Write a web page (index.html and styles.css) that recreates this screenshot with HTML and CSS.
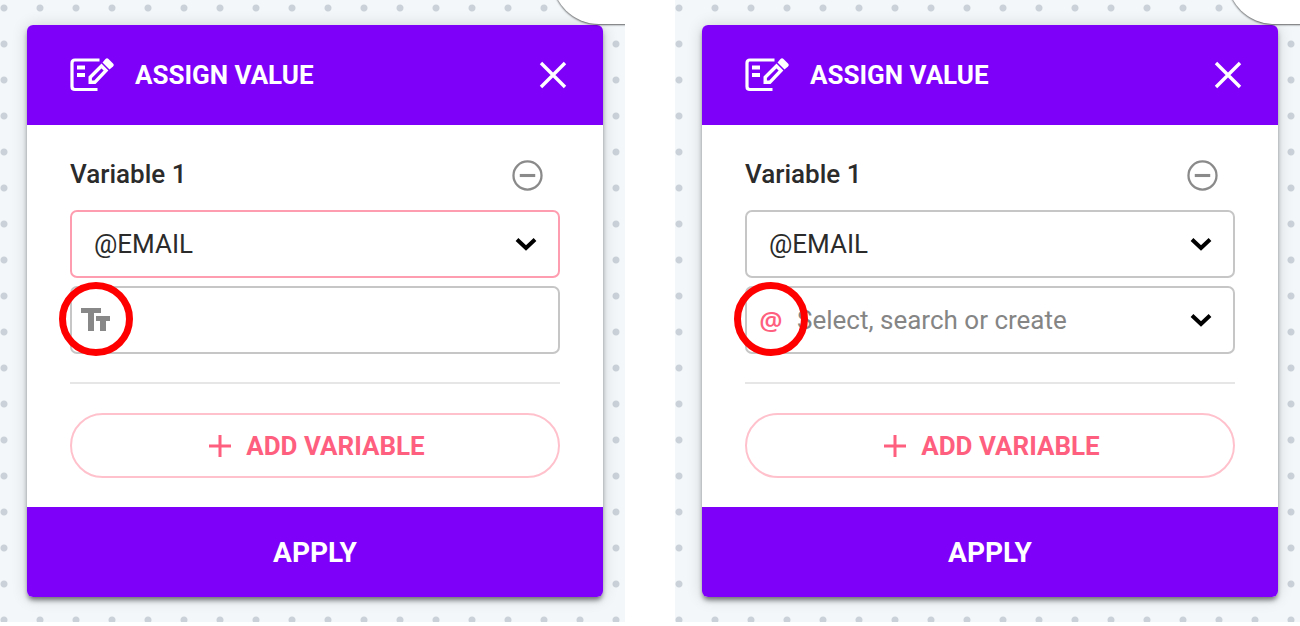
FILE: index.html
```html
<!DOCTYPE html>
<html lang="en">
<head>
<meta charset="utf-8">
<meta name="viewport" content="width=device-width, initial-scale=1">
<title>Assign value</title>
<link rel="stylesheet" href="styles.css">
</head>
<body>
<svg class="sprite" aria-hidden="true">
  <symbol id="i-edit" viewBox="0 0 44 34">
    <path d="M29.500 2H5Q2 2 2 5V28.500Q2 31.500 5 31.500H27.500" fill="none" stroke="currentColor" stroke-width="3.200"/>
    <path d="M7 7.500h8v4H7zM7 15h8v4H7z" fill="currentColor"/>
    <path d="M20.200 24.300V19.300L31.500 8L36 12.500L24.800 24.300Z" fill="none" stroke="currentColor" stroke-width="3.400"/>
    <path d="M32.500 4.500L35.500 1Q37 -0.500 38.500 1L43 5.500Q44.500 7 43 8.500L39.500 11.500Z" fill="currentColor"/>
  </symbol>
  <symbol id="i-close" viewBox="0 0 28 28">
    <path d="M2 2L26 26M26 2L2 26" fill="none" stroke="currentColor" stroke-width="3.400"/>
  </symbol>
  <symbol id="i-minus" viewBox="0 0 32 32">
    <circle cx="16" cy="16" r="13.600" fill="none" stroke="currentColor" stroke-width="2.200"/>
    <path d="M8.500 16H23.500" stroke="currentColor" stroke-width="3"/>
  </symbol>
  <symbol id="i-chevron" viewBox="0 0 22 14">
    <path d="M2 2.500L11 11L20 2.500" fill="none" stroke="currentColor" stroke-width="4"/>
  </symbol>
  <symbol id="i-plus" viewBox="0 0 22 22">
    <path d="M11 0V22M0 11H22" stroke="currentColor" stroke-width="3"/>
  </symbol>
  <symbol id="i-text" viewBox="0 0 30 24">
    <path d="M0 0H20V5H13V23H7V5H0ZM15 8H29V13H25V23H19V13H15Z" fill="currentColor"/>
  </symbol>
</svg>
<main class="board">
  <section class="canvas">
    <form class="card">
      <header class="card-head">
        <svg class="edit-icon" aria-hidden="true"><use href="#i-edit"/></svg>
        <h2 class="title">ASSIGN VALUE</h2>
        <button class="icon-btn close" type="button" aria-label="Close"><svg class="close-icon"><use href="#i-close"/></svg></button>
      </header>
      <div class="card-body">
        <div class="var-row">
          <label class="var-label" for="var-a">Variable 1</label>
          <button class="icon-btn remove" type="button" aria-label="Remove variable"><svg class="minus-icon"><use href="#i-minus"/></svg></button>
        </div>
        <div class="field field-active">
          <select class="control" id="var-a"><option>@EMAIL</option></select>
          <svg class="chevron" aria-hidden="true"><use href="#i-chevron"/></svg>
        </div>
        <div class="field field-value">
          <button class="icon-btn type type-text" type="button" aria-label="Text value"><svg class="text-icon"><use href="#i-text"/></svg></button>
          <input class="control" type="text" aria-label="Value">
          <span class="ring"></span>
        </div>
        <hr class="divider">
        <button class="add" type="button"><svg class="plus-icon" aria-hidden="true"><use href="#i-plus"/></svg>ADD VARIABLE</button>
      </div>
      <button class="apply" type="button">APPLY</button>
    </form>
    <div class="corner"></div>
  </section>
  <section class="canvas">
    <form class="card">
      <header class="card-head">
        <svg class="edit-icon" aria-hidden="true"><use href="#i-edit"/></svg>
        <h2 class="title">ASSIGN VALUE</h2>
        <button class="icon-btn close" type="button" aria-label="Close"><svg class="close-icon"><use href="#i-close"/></svg></button>
      </header>
      <div class="card-body">
        <div class="var-row">
          <label class="var-label" for="var-b">Variable 1</label>
          <button class="icon-btn remove" type="button" aria-label="Remove variable"><svg class="minus-icon"><use href="#i-minus"/></svg></button>
        </div>
        <div class="field">
          <select class="control" id="var-b"><option>@EMAIL</option></select>
          <svg class="chevron" aria-hidden="true"><use href="#i-chevron"/></svg>
        </div>
        <div class="field field-value">
          <button class="icon-btn type type-var" type="button" aria-label="Variable value">@</button>
          <input class="control" type="text" placeholder="Select, search or create" aria-label="Value">
          <svg class="chevron" aria-hidden="true"><use href="#i-chevron"/></svg>
          <span class="ring"></span>
        </div>
        <hr class="divider">
        <button class="add" type="button"><svg class="plus-icon" aria-hidden="true"><use href="#i-plus"/></svg>ADD VARIABLE</button>
      </div>
      <button class="apply" type="button">APPLY</button>
    </form>
    <div class="corner"></div>
  </section>
</main>
</body>
</html>
```
FILE: styles.css
```css
* {
  box-sizing: border-box;
}

body {
  margin: 0;
  background: #fff;
  color: #2b2b2b;
  font-family: Roboto, "Liberation Sans", sans-serif;
  font-size: 26px;
}

button,
input,
select {
  margin: 0;
  font: inherit;
  color: inherit;
}

svg {
  display: block;
  flex: none;
  overflow: visible;
}

.sprite {
  position: absolute;
  width: 0;
  height: 0;
}

.board {
  display: grid;
  grid-template-columns: 1fr 1fr;
  gap: 50px;
}

.canvas {
  position: relative;
  overflow: hidden;
  padding: 25px 22px 25px 27px;
  background-color: #f3f7fa;
  background-image: radial-gradient(circle at 4px 8px, #cad1d9 3px, transparent 4px);
  background-size: 36px 36px;
}

.card {
  display: flex;
  flex-direction: column;
  border-radius: 6px;
  background: #fff;
  box-shadow: 0 4px 5px -1px rgba(0, 0, 0, 0.5), 0 1px 16px rgba(0, 0, 0, 0.16);
}

.card-head {
  display: flex;
  align-items: center;
  height: 100px;
  padding: 0 36px 0 43px;
  border-radius: 6px 6px 0 0;
  background: #7f00f8;
  color: #fff;
}

.edit-icon {
  width: 44px;
  height: 34px;
}

.title {
  flex: 1;
  margin: 0 0 0 21px;
  font-size: 26px;
  font-weight: 700;
  line-height: 32px;
}

.icon-btn {
  display: flex;
  align-items: center;
  justify-content: center;
  padding: 0;
  border: 0;
  background: none;
}

.close-icon {
  width: 28px;
  height: 28px;
}

.card-body {
  display: flex;
  flex-direction: column;
  padding: 34px 43px 29px;
}

.var-row {
  display: flex;
  align-items: flex-start;
  justify-content: space-between;
  padding-right: 16px;
  margin-bottom: 18px;
}

.var-label {
  font-weight: 500;
  line-height: 30px;
}

.remove {
  color: #8a8a8a;
}

.minus-icon {
  width: 33px;
  height: 33px;
}

.field {
  position: relative;
  display: flex;
  align-items: center;
  height: 68px;
  padding: 0 23px 0 22px;
  border: 2px solid #c6c6c6;
  border-radius: 7px;
}

.field-active {
  border-color: #ff9db0;
}

.field-value {
  margin-top: 8px;
  padding-left: 9px;
}

.control {
  flex: 1;
  min-width: 0;
  height: 100%;
  padding: 0;
  border: 0;
  outline: 0;
  background: none;
  appearance: none;
}

.control::placeholder {
  color: #858585;
  opacity: 1;
}

.chevron {
  width: 22px;
  height: 14px;
  color: #000;
  pointer-events: none;
}

.field > .chevron {
  margin-right: -2px;
}

.type {
  width: 30px;
  margin-right: 11px;
}

.type-text {
  color: #888;
}

.type-var {
  color: #ff5f7e;
  font-family: "Open Sans", sans-serif;
  font-weight: 600;
  line-height: 30px;
}

.text-icon {
  width: 30px;
  height: 24px;
}

.ring {
  position: absolute;
  top: -6px;
  left: -13px;
  width: 74px;
  height: 74px;
  border: 7px solid #f00;
  border-radius: 50%;
  pointer-events: none;
}

.divider {
  width: 100%;
  height: 2px;
  margin: 28px 0 29px;
  border: 0;
  background: #e6e6e6;
}

.add {
  display: flex;
  align-items: center;
  justify-content: center;
  gap: 15px;
  height: 65px;
  padding: 0 0 0 4px;
  border: 2px solid #ffc2cd;
  border-radius: 33px;
  background: #fff;
  color: #ff5f7e;
  font-weight: 700;
}

.plus-icon {
  width: 22px;
  height: 22px;
}

.apply {
  height: 90px;
  padding: 0;
  border: 0;
  border-radius: 0 0 6px 6px;
  background: #7f00f8;
  color: #fff;
  font-size: 28px;
  font-weight: 700;
}

.corner {
  position: absolute;
  top: -76px;
  right: -100px;
  width: 173px;
  height: 100px;
  border-radius: 47px;
  background: #fff;
  box-shadow: 0 1px 2px rgba(0, 0, 0, 0.6);
}
```
